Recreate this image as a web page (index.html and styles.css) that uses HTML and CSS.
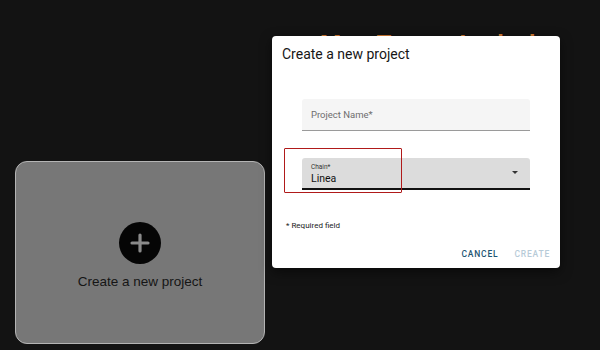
FILE: index.html
```html
<!DOCTYPE html>
<html>
<head>
<meta charset="utf-8">
<link rel="stylesheet" href="styles.css">
</head>
<body>
<div class="page">
  <div class="heading-clip">
    <h1 class="heading">My Test Lab l</h1>
  </div>
  <div class="card">
    <div class="plus">
      <svg width="42" height="42" viewBox="0 0 42 42"><path d="M21 13v16M13 21h16" stroke="#8a8a8a" stroke-width="3.2" stroke-linecap="round"/></svg>
    </div>
    <div class="card-label">Create a new project</div>
  </div>
</div>
<div class="dialog">
  <h2 class="dialog-title">Create a new project</h2>
  <div class="fields">
    <div class="field name">
      <span class="placeholder">Project Name*</span>
    </div>
    <div class="field select">
      <div class="select-text">
        <span class="small-label">Chain*</span>
        <span class="value">Linea</span>
      </div>
      <svg class="caret" width="6" height="3" viewBox="0 0 6 3"><path d="M0 0h6L3 3z" fill="#333"/></svg>
    </div>
  </div>
  <p class="required">* Required field</p>
  <div class="actions">
    <button class="btn cancel">CANCEL</button>
    <button class="btn create">CREATE</button>
  </div>
  <div class="highlight"></div>
</div>
</body>
</html>
```
FILE: styles.css
```css
html, body {
  margin: 0;
  padding: 0;
  width: 600px;
  height: 350px;
  overflow: hidden;
  background: #131313;
  font-family: Roboto, "Liberation Sans", sans-serif;
}
.page {
  position: relative;
  width: 600px;
  height: 350px;
}
.heading-clip {
  position: absolute;
  left: 320px;
  top: 0;
  width: 240px;
  height: 36px;
  overflow: hidden;
}
.heading {
  margin: 32px 0 0 0;
  font-size: 24px;
  font-weight: 700;
  color: #d27a32;
  letter-spacing: 6px;
  line-height: 24px;
  white-space: nowrap;
}
.card {
  position: absolute;
  left: 15px;
  top: 161px;
  width: 250px;
  height: 183px;
  box-sizing: border-box;
  background: #777777;
  border: 1px solid #b4b4b4;
  border-radius: 12px;
  display: flex;
  flex-direction: column;
  align-items: center;
  padding-top: 60px;
}
.plus {
  width: 42px;
  height: 42px;
  border-radius: 50%;
  background: #050505;
  display: flex;
}
.card-label {
  margin-top: 10px;
  font-family: "Liberation Sans", Arial, sans-serif;
  font-size: 13.5px;
  color: #151515;
}
.dialog {
  position: absolute;
  left: 272px;
  top: 36px;
  width: 288px;
  height: 232px;
  box-sizing: border-box;
  background: #ffffff;
  border-radius: 4px;
  box-shadow: 0 4px 12px rgba(0,0,0,0.5);
  padding: 0 10px 0 14px;
}
.dialog-title {
  margin: 0 0 0 -4px;
  padding-top: 9px;
  font-size: 14px;
  font-weight: 400;
  color: #161616;
  line-height: 18px;
}
.fields {
  margin-top: 36px;
  margin-left: 16px;
  width: 228px;
  display: flex;
  flex-direction: column;
  gap: 27px;
}
.field {
  box-sizing: border-box;
  height: 32px;
  border-radius: 3px 3px 0 0;
}
.name {
  background: #f5f5f5;
  border-bottom: 1px solid #9a9a9a;
  display: flex;
  align-items: center;
  padding-left: 9px;
}
.placeholder {
  font-size: 9.5px;
  color: #6e6e6e;
}
.select {
  background: #dcdcdc;
  border-bottom: 2px solid #111;
  display: flex;
  align-items: center;
  justify-content: space-between;
  padding: 0 12px 0 9px;
}
.select-text {
  display: flex;
  flex-direction: column;
  padding-top: 3px;
}
.small-label {
  font-size: 6.5px;
  color: #333;
  line-height: 9px;
}
.value {
  font-size: 10.5px;
  color: #111;
  line-height: 14px;
}
.caret {
  margin-top: -1px;
}
.required {
  margin: 31px 0 0 0;
  font-size: 8px;
  color: #222;
}
.actions {
  display: flex;
  justify-content: flex-end;
  gap: 16px;
  margin-top: 19px;
}
.btn {
  background: none;
  border: none;
  padding: 0;
  font-family: Roboto, sans-serif;
  font-size: 8.5px;
  font-weight: 500;
  letter-spacing: 0.8px;
}
.cancel { color: #1d5573; }
.create { color: #b7cbd8; }
.highlight {
  position: absolute;
  left: 12px;
  top: 112px;
  width: 118px;
  height: 45px;
  box-sizing: border-box;
  border: 1.5px solid #b01a1a;
  border-radius: 1px;
}
```
